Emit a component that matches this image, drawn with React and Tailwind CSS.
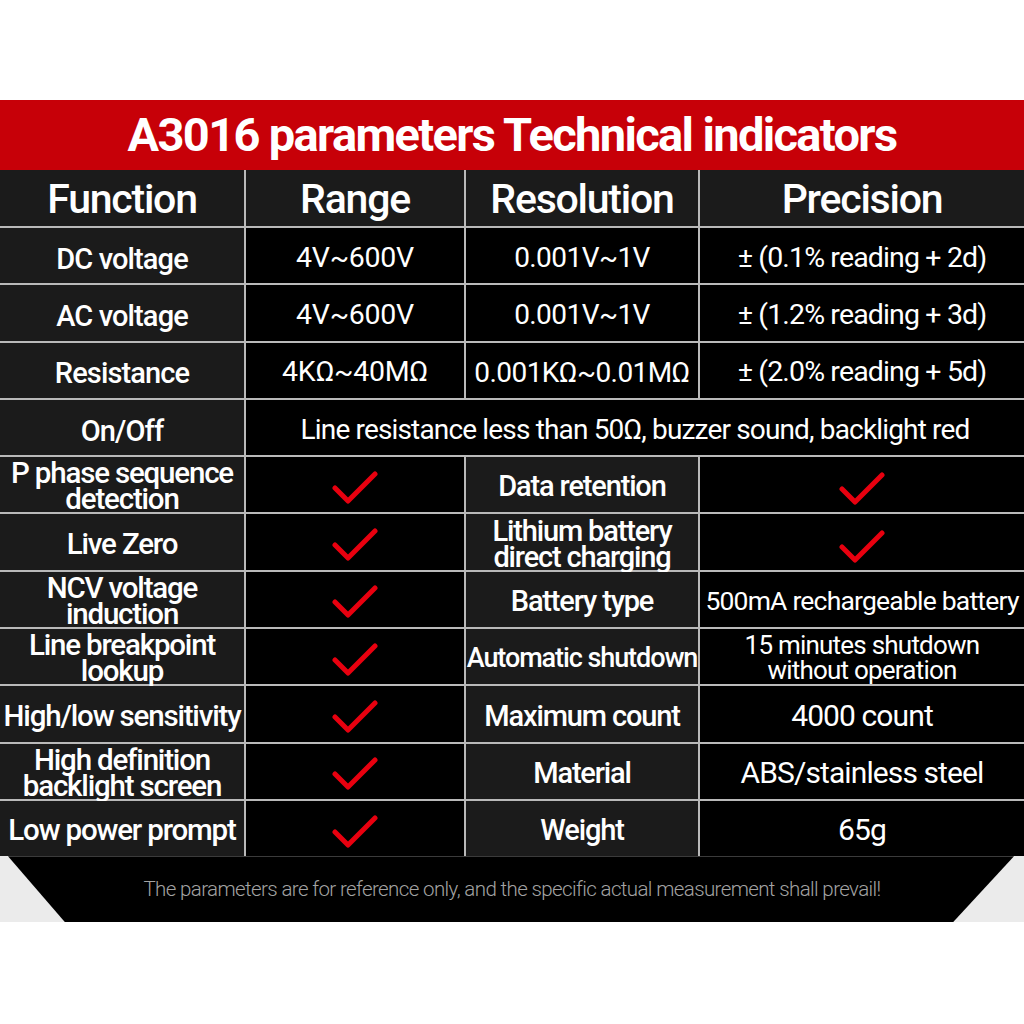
import React from 'react';

const Check = () => (
    <svg width="48" height="34" viewBox="0 0 48 34" className="translate-y-[3px]">
        <polyline points="4,17 17,30 44,3" fill="none" stroke="#e8000f" strokeWidth="5" strokeLinecap="round" strokeLinejoin="round" />
    </svg>
);

const measureRows = [
    ['DC voltage', '4V~600V', '0.001V~1V', '± (0.1% reading + 2d)'],
    ['AC voltage', '4V~600V', '0.001V~1V', '± (1.2% reading + 3d)'],
    ['Resistance', '4KΩ~40MΩ', '0.001KΩ~0.01MΩ', '± (2.0% reading + 5d)'],
];

const featureRows = [
    { name: ['P phase sequence', 'detection'], label: ['Data retention'], value: null },
    { name: ['Live Zero'], label: ['Lithium battery', 'direct charging'], value: null },
    { name: ['NCV voltage', 'induction'], label: ['Battery type'], value: ['500mA rechargeable battery'], small: true },
    { name: ['Line breakpoint', 'lookup'], label: ['Automatic shutdown'], narrow: true, value: ['15 minutes shutdown', 'without operation'], small: true, tight: true },
    { name: ['High/low sensitivity'], label: ['Maximum count'], value: ['4000 count'] },
    { name: ['High definition', 'backlight screen'], label: ['Material'], value: ['ABS/stainless steel'] },
    { name: ['Low power prompt'], label: ['Weight'], value: ['65g'] },
];

const Lines = ({ lines }) => lines.map((l, i) => <span key={i} className="block">{l}</span>);

const cell = 'h-[55.3px] flex flex-col items-center justify-center text-center';

export default function App() {
    return (
        <div className="w-[1024px] h-[1024px] bg-white font-[Roboto,sans-serif] text-white">
            <div className="h-[100px]" />
            <div className="h-[70px] bg-[#c70008] flex items-center justify-center">
                <h1 className="text-[47px] font-bold tracking-[-0.035em] leading-none pb-[2px]">A3016 parameters Technical indicators</h1>
            </div>
            <div className="grid grid-cols-[244px_218px_232px_324px] gap-[2px] bg-[#b9b9b9]">
                {['Function', 'Range', 'Resolution', 'Precision'].map((h) => (
                    <div key={h} className="h-[56px] bg-[#1b1b1b] flex items-center justify-center text-[41px] font-medium tracking-[-0.03em] pt-[4px]">
                        {h}
                    </div>
                ))}
                {measureRows.map((r) => (
                    <React.Fragment key={r[0]}>
                        <div className={`${cell} bg-[#1b1b1b] text-[29px] font-medium tracking-[-0.03em] pt-[8px]`}>{r[0]}</div>
                        <div className={`${cell} bg-black text-[28.5px] tracking-[-0.01em] pt-[5px]`}>{r[1]}</div>
                        <div className={`${cell} bg-black text-[28px] tracking-[-0.02em] pt-[5px]`}>{r[2]}</div>
                        <div className={`${cell} bg-black text-[28.5px] tracking-[-0.03em] pt-[5px]`}>{r[3]}</div>
                    </React.Fragment>
                ))}
                <div className={`${cell} bg-[#1b1b1b] text-[29px] font-medium tracking-[-0.03em] pt-[8px]`}>On/Off</div>
                <div className={`${cell} col-span-3 bg-black text-[28px] tracking-[-0.03em] pt-[5px]`}>
                    Line resistance less than 50Ω, buzzer sound, backlight red
                </div>
                {featureRows.map((r) => (
                    <React.Fragment key={r.name[0]}>
                        <div className={`${cell} bg-[#1b1b1b] text-[29.5px] font-medium tracking-[-0.04em] leading-[26px] pt-[3px]`}>
                            <Lines lines={r.name} />
                        </div>
                        <div className={`${cell} bg-black`}>
                            <Check />
                        </div>
                        <div className={`${cell} bg-[#1b1b1b] ${r.narrow ? 'text-[27px]' : 'text-[29px]'} font-medium tracking-[-0.04em] leading-[26px] pt-[3px]`}>
                            <Lines lines={r.label} />
                        </div>
                        <div className={`${cell} bg-black ${r.small ? (r.tight ? 'text-[26px] leading-[25px]' : 'text-[26.5px] leading-[25px]') : 'text-[30px] leading-[26px]'} tracking-[-0.03em] pt-[3px]`}>
                            {r.value ? <Lines lines={r.value} /> : <Check />}
                        </div>
                    </React.Fragment>
                ))}
            </div>
            <div className="h-[66px] bg-[#ebebeb]">
                <div className="h-full bg-black [clip-path:polygon(8px_0,1014px_0,953px_100%,65px_100%)] flex items-center justify-center">
                    <p className="text-[20.5px] font-light text-[#a3a3a3] tracking-[-0.03em]">
                        The parameters are for reference only, and the specific actual measurement shall prevail!
                    </p>
                </div>
            </div>
        </div>
    );
}
